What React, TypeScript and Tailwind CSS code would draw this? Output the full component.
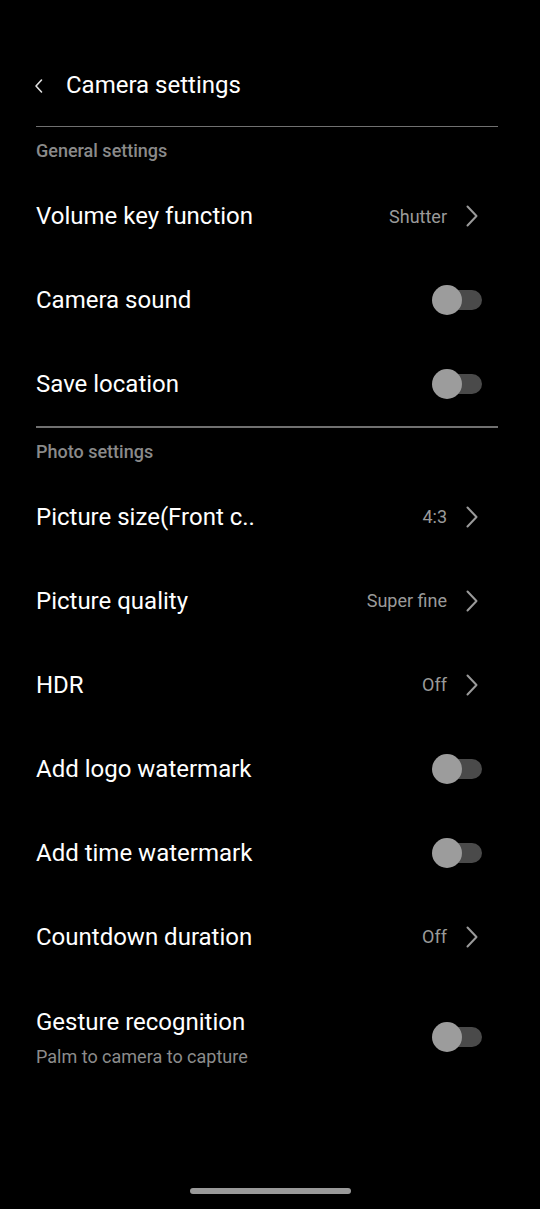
import React from "react";

const Chevron = () => (
  <svg width="12" height="22" viewBox="0 0 12 22" fill="none" className="shrink-0">
    <path d="M1.5 1.5 L10.5 11 L1.5 20.5" stroke="#9a9a9a" strokeWidth="2" strokeLinecap="round" strokeLinejoin="round" />
  </svg>
);

const Toggle = ({ className = "" }: { className?: string }) => (
  <div className={`relative w-[50px] h-[30px] flex items-center shrink-0 ${className}`}>
    <div className="absolute left-[10px] right-0 h-[20px] rounded-full bg-[#4a4a4a]" />
    <div className="absolute left-0 w-[30px] h-[30px] rounded-full bg-[#9c9c9c]" />
  </div>
);

type Row = { title: string; value?: string; toggle?: boolean; sub?: string };

const RowItem = ({ r }: { r: Row }) => (
  <div className={r.sub ? "flex items-start justify-between pt-[29px] pb-[20px] pl-[36px] pr-[58px]" : "flex items-center justify-between h-[84px] pl-[36px] pr-[58px]"}>
    <div className="flex flex-col">
      <span className="text-[24px] text-white leading-[28px]">{r.title}</span>
      {r.sub && <span className="text-[18px] text-[#8c8c8c] leading-[22px] mt-[10px]">{r.sub}</span>}
    </div>
    {r.toggle ? (
      <Toggle className={r.sub ? "mt-[14px]" : ""} />
    ) : (
      <div className="flex items-center gap-[19px] mr-[4px]">
        <span className="text-[18px] text-[#9a9a9a]">{r.value}</span>
        <Chevron />
      </div>
    )}
  </div>
);

const Header = ({ text }: { text: string }) => (
  <div className="pl-[36px] pt-[13px] h-[47px] text-[18px] font-medium text-[#8a8a8a] leading-[22px]">{text}</div>
);

export default function App() {
  const general: Row[] = [
    { title: "Volume key function", value: "Shutter" },
    { title: "Camera sound", toggle: true },
    { title: "Save location", toggle: true },
  ];
  const photo: Row[] = [
    { title: "Picture size(Front c..", value: "4:3" },
    { title: "Picture quality", value: "Super fine" },
    { title: "HDR", value: "Off" },
    { title: "Add logo watermark", toggle: true },
    { title: "Add time watermark", toggle: true },
    { title: "Countdown duration", value: "Off" },
    { title: "Gesture recognition", toggle: true, sub: "Palm to camera to capture" },
  ];
  return (
    <div className="w-[540px] h-[1209px] bg-black flex flex-col relative" style={{ fontFamily: "Roboto, 'Noto Sans', sans-serif" }}>
      <div className="h-[125.5px] flex items-start pt-[69px] pl-[34px]">
        <svg width="10" height="16" viewBox="0 0 10 16" fill="none" className="mt-[9px]">
          <path d="M7.5 2 L2 8 L7.5 14" stroke="#e0e0e0" strokeWidth="1.6" strokeLinecap="round" strokeLinejoin="round" />
        </svg>
        <span className="ml-[22px] text-[24px] text-white leading-[32px]">Camera settings</span>
      </div>
      <div className="ml-[36px] mr-[42px] h-[1.5px] bg-[#707070]" />
      <Header text="General settings" />
      <div>
        {general.map((r) => (
          <RowItem key={r.title} r={r} />
        ))}
      </div>
      <div className="ml-[36px] mr-[42px] h-[1.5px] bg-[#707070]" />
      <Header text="Photo settings" />
      <div>
        {photo.map((r) => (
          <RowItem key={r.title} r={r} />
        ))}
      </div>
      <div className="absolute left-[190px] bottom-[15px] w-[161px] h-[6px] rounded-full bg-[#9a9a9a]" />
    </div>
  );
}
